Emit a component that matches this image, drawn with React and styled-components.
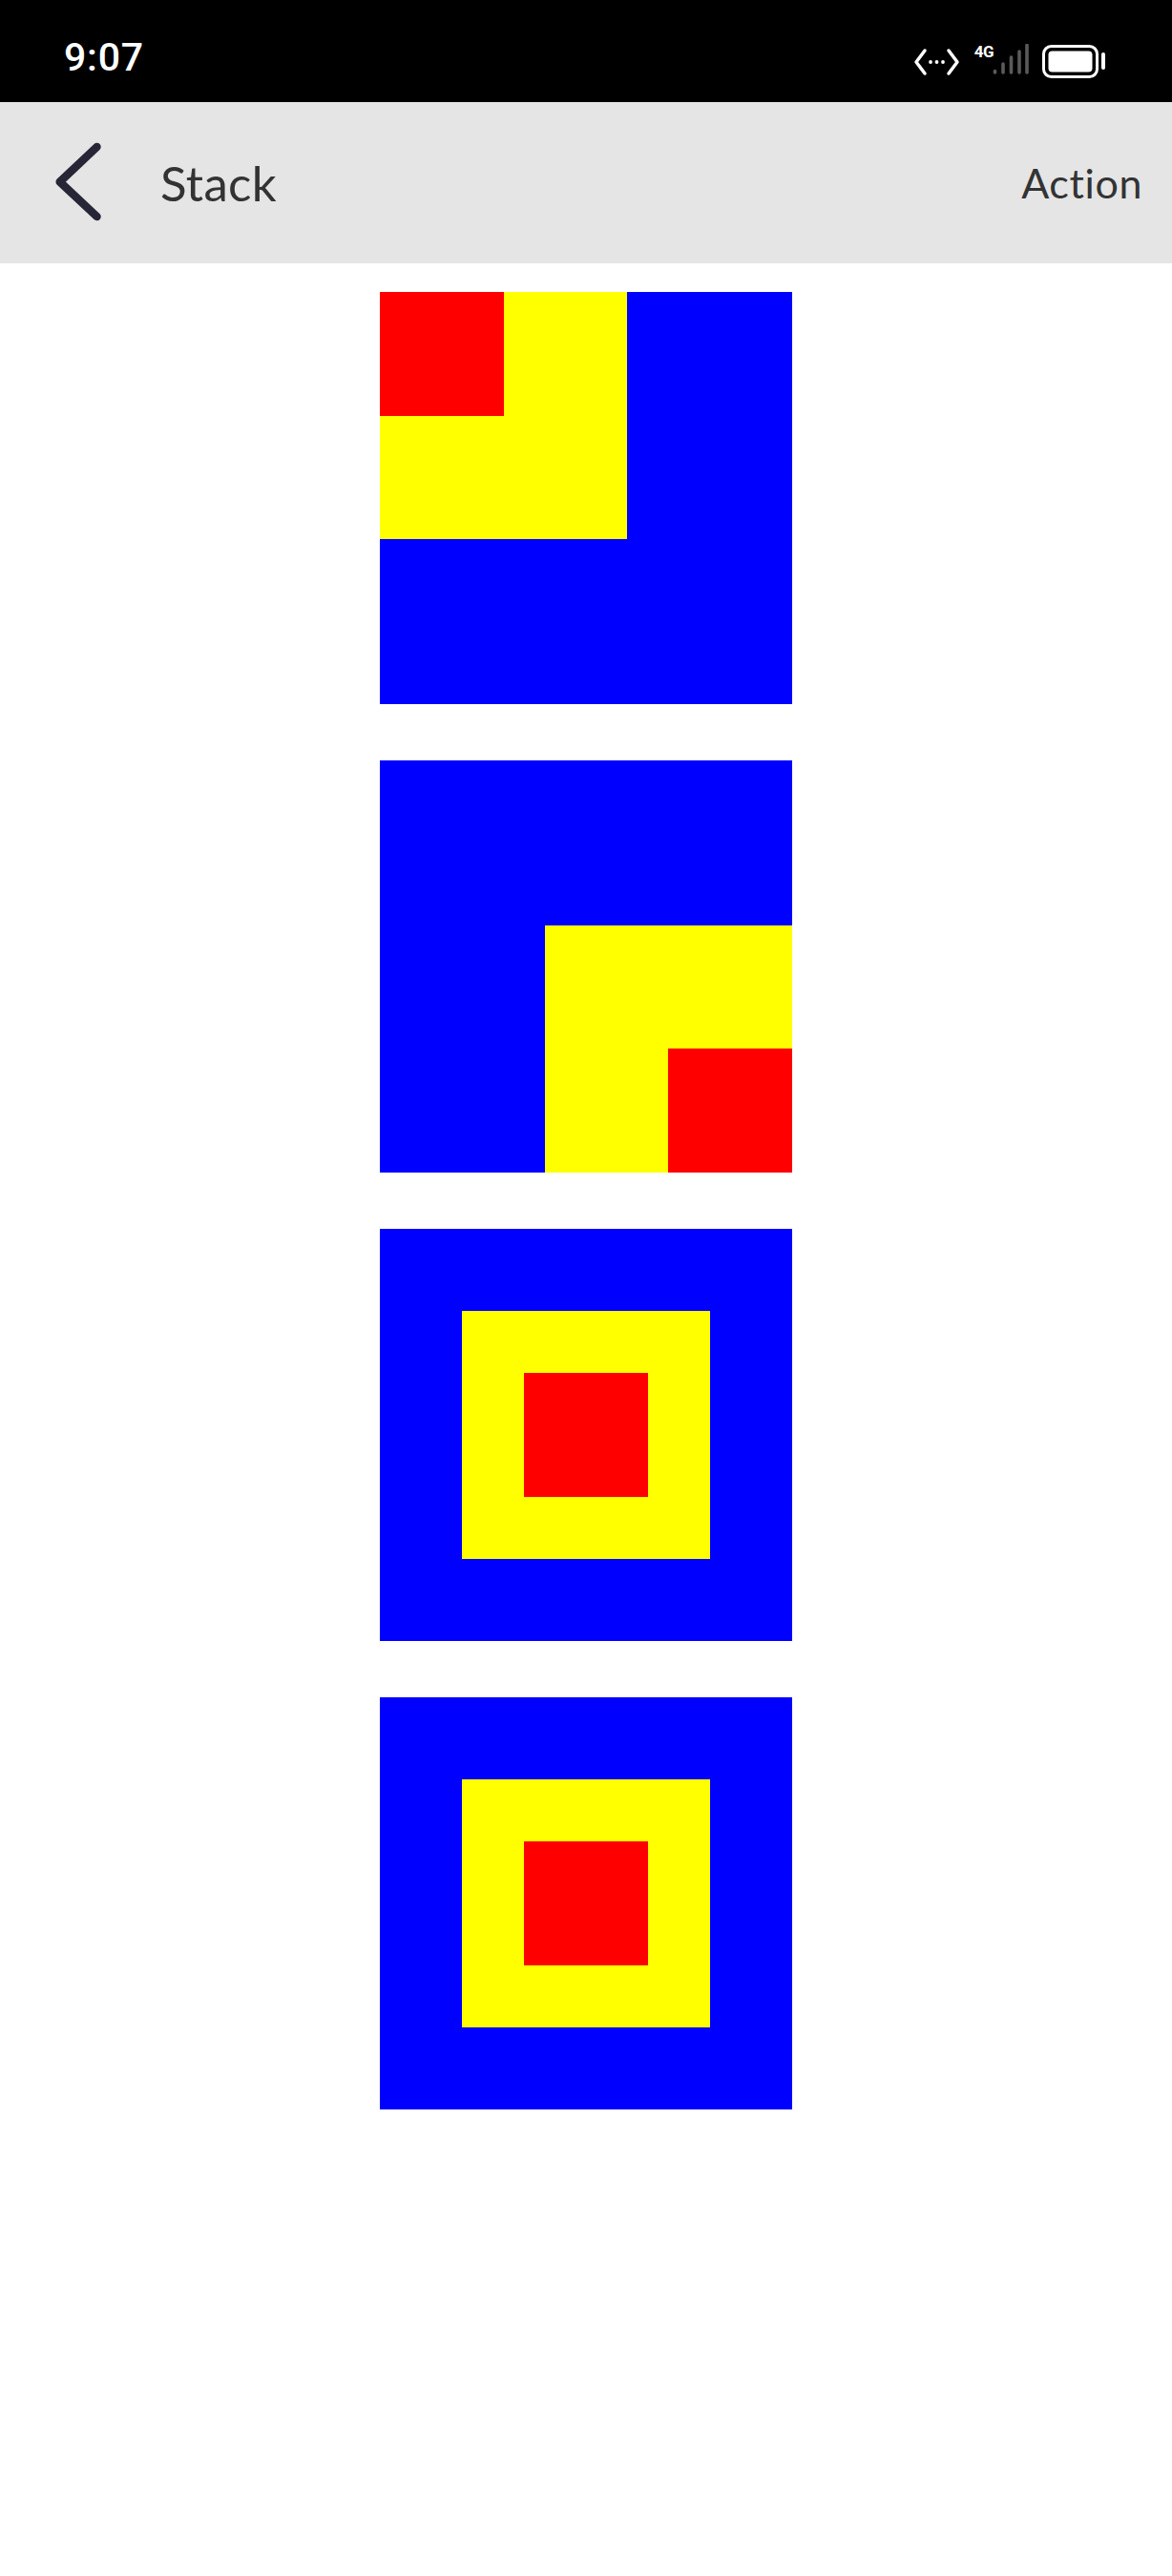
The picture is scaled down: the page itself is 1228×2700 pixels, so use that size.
import React from 'react';
import styled, { createGlobalStyle } from 'styled-components';

const GlobalStyle = createGlobalStyle`
  body {
    margin: 0;
    background: #fff;
    font-family: 'Lato', 'Roboto', sans-serif;
  }
`;

const BOX = 432;

const Screen = styled.div`
  width: 1228px;
  min-height: 2700px;
  background: #fff;
`;

const StatusBar = styled.div`
  height: 107px;
  background: #000;
  display: flex;
  align-items: flex-start;
  padding: 0 69px 0 67px;
  box-sizing: border-box;
`;

const Clock = styled.div`
  margin-top: 40px;
  font-family: 'Roboto', sans-serif;
  font-weight: 500;
  font-size: 41px;
  line-height: 41px;
  letter-spacing: 0.8px;
  color: #fff;
`;

const StatusIcons = styled.div`
  margin-left: auto;
  margin-top: 46px;
  display: flex;
  align-items: flex-start;
  height: 36px;
`;

const NetLabel = styled.span`
  margin: 0 0 0 14px;
  font-family: 'Roboto', sans-serif;
  font-weight: 700;
  font-size: 17px;
  line-height: 14px;
  letter-spacing: -0.5px;
  color: #fff;
  display: block;
  padding-top: 1px;
`;

const Signal = styled.svg`
  margin-left: -2px;
`;

const Battery = styled.svg`
  margin-left: 10px;
`;

const NavBar = styled.div`
  height: 169px;
  background: #e5e5e5;
  display: flex;
  align-items: center;
  padding: 0 31px 0 50px;
  box-sizing: border-box;
`;

const BackIcon = styled.svg`
  flex: none;
`;

const Title = styled.div`
  margin-left: 53px;
  font-size: 51px;
  font-weight: 400;
  color: #333;
  letter-spacing: 0.3px;
`;

const Action = styled.div`
  margin-left: auto;
  font-size: 43px;
  font-weight: 400;
  color: #333;
  letter-spacing: 0.6px;
`;

const Content = styled.div`
  display: flex;
  flex-direction: column;
  align-items: center;
  gap: 59px;
  padding-top: 30px;
`;

const alignMap = {
  topLeft: ['start', 'start'],
  bottomRight: ['end', 'end'],
  center: ['center', 'center'],
};

// grid stack: every layer lives in the same cell
const Stack = styled.div`
  display: grid;
  width: ${BOX}px;
  height: ${BOX}px;
  & > * {
    grid-area: 1 / 1;
    justify-self: ${(p) => alignMap[p.$align][0]};
    align-self: ${(p) => alignMap[p.$align][1]};
  }
`;

const Layer = styled.div`
  width: ${(p) => p.$size}px;
  height: ${(p) => p.$size}px;
  background: ${(p) => p.$color};
`;

function StackDemo({ align }) {
  return (
    <Stack $align={align}>
      <Layer $size={BOX} $color="#0000ff" />
      <Layer $size={BOX * 0.6} $color="#ffff00" />
      <Layer $size={BOX * 0.3} $color="#ff0000" />
    </Stack>
  );
}

export default function App() {
  return (
    <Screen>
      <GlobalStyle />
      <StatusBar>
        <Clock>9:07</Clock>
        <StatusIcons>
          <svg width="50" height="36" viewBox="0 0 50 36">
            <g fill="none" stroke="#fff" strokeWidth="3.5" strokeLinecap="round" strokeLinejoin="round">
              <polyline points="12,7 3,19 12,31" />
              <polyline points="37,7 46,19 37,31" />
            </g>
            <circle cx="18" cy="19" r="1.9" fill="#fff" />
            <circle cx="24.5" cy="19" r="1.9" fill="#fff" />
            <circle cx="31" cy="19" r="1.9" fill="#fff" />
          </svg>
          <NetLabel>4G</NetLabel>
          <Signal width="40" height="36" viewBox="0 0 40 36">
            <g stroke="#5a5a5a" strokeWidth="3.6" strokeLinecap="round">
              <line x1="3.5" y1="28.5" x2="3.5" y2="30" />
              <line x1="12" y1="21" x2="12" y2="30" />
              <line x1="20.5" y1="14" x2="20.5" y2="30" />
              <line x1="29" y1="8" x2="29" y2="30" />
              <line x1="37" y1="1.5" x2="37" y2="30" />
            </g>
          </Signal>
          <Battery width="70" height="36" viewBox="0 0 70 36">
            <rect x="4.5" y="2.5" width="56" height="32" rx="8" fill="none" stroke="#fff" strokeWidth="3" />
            <rect x="9.5" y="7.5" width="46" height="22" rx="4" fill="#fff" />
            <rect x="65" y="9" width="4" height="18" rx="2" fill="#fff" />
          </Battery>
        </StatusIcons>
      </StatusBar>
      <NavBar>
        <BackIcon width="65" height="95" viewBox="0 0 65 95">
          <polyline
            points="51.5,10 12.7,46.7 51.5,83"
            fill="none"
            stroke="#262637"
            strokeWidth="8.5"
            strokeLinecap="round"
            strokeLinejoin="round"
          />
        </BackIcon>
        <Title>Stack</Title>
        <Action>Action</Action>
      </NavBar>
      <Content>
        <StackDemo align="topLeft" />
        <StackDemo align="bottomRight" />
        <StackDemo align="center" />
        <StackDemo align="center" />
      </Content>
    </Screen>
  );
}
